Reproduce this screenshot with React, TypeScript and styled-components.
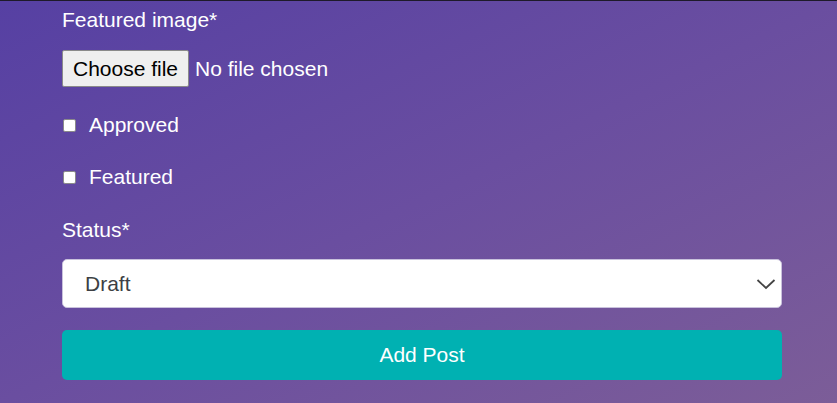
import React from "react";
import styled, { createGlobalStyle } from "styled-components";

const Global = createGlobalStyle`
  html, body { margin: 0; padding: 0; }
  body {
    width: 837px;
    height: 403px;
    overflow: hidden;
    font-family: "Liberation Sans", Arial, sans-serif;
  }
`;

const Page = styled.div`
  box-sizing: border-box;
  width: 837px;
  height: 403px;
  border-top: 1px solid #1e1a2a;
  background: linear-gradient(to bottom right, #5640a3 0%, #6a4ea0 50%, #7c5d98 100%);
  padding: 7px 55px 0 62px;
`;

const Form = styled.form`
  display: flex;
  flex-direction: column;
  width: 720px;
`;

const Label = styled.label`
  color: #ffffff;
  font-size: 21px;
  line-height: 24px;
`;

const FileRow = styled.div`
  display: flex;
  align-items: center;
  gap: 6px;
  margin-top: 18px;
`;

const FileButton = styled.button`
  box-sizing: border-box;
  width: 127px;
  height: 37px;
  padding: 0;
  font-family: inherit;
  font-size: 21px;
  color: #000;
  background: #efefef;
  border: 1px solid #8a8a8a;
  border-radius: 2px;
`;

const FileText = styled.span`
  color: #fff;
  font-size: 21px;
`;

const CheckRow = styled.label<{ $top: number }>`
  display: flex;
  align-items: center;
  gap: 13px;
  margin-top: ${(p) => p.$top}px;
  color: #fff;
  font-size: 21px;
  line-height: 24px;
`;

const Box = styled.span`
  box-sizing: border-box;
  width: 13px;
  height: 13px;
  margin-left: 1px;
  background: #fff;
  border: 1px solid #8a8a8a;
  border-radius: 2px;
`;

const StatusLabel = styled(Label)`
  margin-top: 29px;
`;

const SelectBox = styled.div`
  box-sizing: border-box;
  margin-top: 17px;
  height: 49px;
  background: #fff;
  border: 1px solid #c9c2dc;
  border-radius: 5px;
  display: flex;
  align-items: center;
  justify-content: space-between;
  padding: 1px 5px 0 22px;
  color: #3d3f44;
  font-size: 21px;
`;

const SubmitButton = styled.button`
  margin-top: 22px;
  height: 50px;
  border: none;
  border-radius: 5px;
  background: #00b1b2;
  color: #fff;
  font-family: inherit;
  font-size: 21px;
`;

export default function App() {
  return (
    <>
      <Global />
      <Page>
        <Form onSubmit={(e) => e.preventDefault()}>
          <Label>Featured image*</Label>
          <FileRow>
            <FileButton type="button">Choose file</FileButton>
            <FileText>No file chosen</FileText>
          </FileRow>
          <CheckRow $top={26}>
            <Box />
            Approved
          </CheckRow>
          <CheckRow $top={28}>
            <Box />
            Featured
          </CheckRow>
          <StatusLabel>Status*</StatusLabel>
          <SelectBox>
            <span>Draft</span>
            <svg width="20" height="12" viewBox="0 0 20 12">
              <path d="M1.5 2 L10 10 L18.5 2" fill="none" stroke="#444" strokeWidth="1.8" />
            </svg>
          </SelectBox>
          <SubmitButton type="submit">Add Post</SubmitButton>
        </Form>
      </Page>
    </>
  );
}
